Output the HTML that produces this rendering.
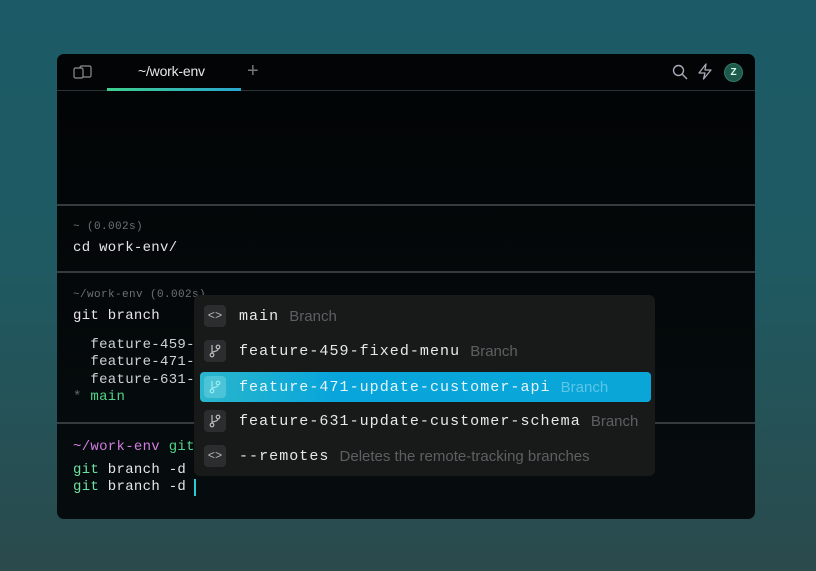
<!DOCTYPE html>
<html><head><style>
*{margin:0;padding:0;box-sizing:border-box}
body{width:816px;height:571px;overflow:hidden;background:linear-gradient(180deg,#1b5a66 0%,#1f5a62 45%,#2a4a4c 100%);font-family:"Liberation Mono",monospace;position:relative}
.win{position:absolute;left:57px;top:54px;width:698px;height:465px;background:linear-gradient(180deg,#020405 0%,#060c0e 100%);border-radius:7px;overflow:hidden}
.tabbar{position:absolute;left:0;top:0;width:698px;height:37px;border-bottom:1px solid #2c3336}
.tab{position:absolute;left:81px;top:9px;color:#e8e8e8;font:14px "Liberation Sans",sans-serif;letter-spacing:-.2px}
.uline{position:absolute;left:50px;top:34px;width:134px;height:3px;background:linear-gradient(90deg,#3fcf8e,#2aa6d0)}
.sep{position:absolute;left:0;width:698px;height:2px;background:#343c3f}
.t{position:absolute;left:16px;font-size:14px;letter-spacing:.3px;color:#e6e6e6;white-space:pre}
.s{position:absolute;left:16px;font-size:11px;letter-spacing:.4px;color:#6b7275;white-space:pre}
.pop{position:absolute;left:194px;top:295px;width:461px;height:181px;background:#181919;border-radius:6px}
.row{position:absolute;left:6px;width:451px;height:30px;border-radius:4px}
.ic{position:absolute;left:4px;top:4px;width:22px;height:22px;border-radius:4px;background:#2c2d2e;color:#bbb;font-size:12px;text-align:center;line-height:22px}
.lb{position:absolute;left:39px;top:6px;font-size:15px;letter-spacing:1.05px;color:#e8e8e8;white-space:pre}
.ds{font-family:"Liberation Sans",sans-serif;font-size:15px;letter-spacing:0;color:#5d6062;position:relative;top:1px}
.hl{background:linear-gradient(90deg,#2ab6cc,#08a5dc 30%,#0aa6d8)}
.hl .ic{background:#4cc3d7;color:#9be}
.hl .lb{color:#e6f6fb}
.hl .ds{color:#5bc6e6}
</style></head><body>
<div class="win">
 <div class="tabbar">
  <svg style="position:absolute;left:16px;top:11px" width="19" height="15" viewBox="0 0 19 15" fill="none" stroke="#8a9090" stroke-width="1.2"><rect x="1" y="3" width="9" height="10" rx="1.5"/><path d="M7 3V2.5A1.5 1.5 0 0 1 8.5 1H16.5A1.5 1.5 0 0 1 18 2.5V10.5A1.5 1.5 0 0 1 16.5 12H10"/></svg>
  <div class="tab">~/work-env</div>
  <div style="position:absolute;left:190px;top:6px;color:#777;font:20px 'Liberation Sans',sans-serif">+</div>
  <svg style="position:absolute;left:615px;top:10px" width="16" height="16" viewBox="0 0 16 16" fill="none" stroke="#aab" stroke-width="1.4"><circle cx="6.5" cy="6.5" r="5"/><path d="M10.3 10.3L15 15"/></svg>
  <svg style="position:absolute;left:640px;top:9px" width="16" height="17" viewBox="0 0 16 17" fill="none" stroke="#aab" stroke-width="1.3" stroke-linejoin="round"><path d="M9 1L2 10H8L6.5 16L14 7H8Z"/></svg>
  <div style="position:absolute;left:667px;top:9px;width:19px;height:19px;border-radius:50%;background:#1e5a4c;border:1px solid #2f7a66;color:#dfe;font:bold 10px 'Liberation Sans',sans-serif;text-align:center;line-height:17px">Z</div>
  <div class="uline"></div>
 </div>
 <div class="sep" style="top:150px"></div>
 <div class="s" style="top:167px">~ (0.002s)</div>
 <div class="t" style="top:186px">cd work-env/</div>
 <div class="sep" style="top:217px"></div>
 <div class="s" style="top:235px">~/work-env (0.002s)</div>
 <div class="t" style="top:254px">git branch</div>
 <div class="t" style="top:283px;color:#cfd2d3">  feature-459-</div>
 <div class="t" style="top:300px;color:#cfd2d3">  feature-471-</div>
 <div class="t" style="top:318px;color:#cfd2d3">  feature-631-</div>
 <div class="t" style="top:335px;color:#666">* <span style="color:#4fd38a">main</span></div>
 <div class="sep" style="top:368px"></div>
 <div class="t" style="top:385px;color:#d27ee0">~/work-env <span style="color:#4fd38a">git</span></div>
 <div class="t" style="top:408px"><span style="color:#6fe0a0">git</span> branch -d</div>
 <div class="t" style="top:425px"><span style="color:#6fe0a0">git</span> branch -d</div>
 <div style="position:absolute;left:137px;top:425px;width:2px;height:17px;background:#2ec8d8"></div>
</div>
<div class="pop">
 <div class="row" style="top:6px"><div class="ic">&lt;&gt;</div><div class="lb">main <span class="ds">Branch</span></div></div>
 <div class="row" style="top:41px"><div class="ic"><svg width="12" height="14" viewBox="0 0 12 14" fill="none" stroke="#bbb" stroke-width="1.2" style="margin-top:4px"><circle cx="3" cy="11" r="1.8"/><circle cx="9" cy="3" r="1.8"/><path d="M3 1V9M9 5C9 8 3 7 3 9"/></svg></div><div class="lb">feature-459-fixed-menu <span class="ds">Branch</span></div></div>
 <div class="row hl" style="top:77px"><div class="ic"><svg width="12" height="14" viewBox="0 0 12 14" fill="none" stroke="#9ee" stroke-width="1.2" style="margin-top:4px"><circle cx="3" cy="11" r="1.8"/><circle cx="9" cy="3" r="1.8"/><path d="M3 1V9M9 5C9 8 3 7 3 9"/></svg></div><div class="lb">feature-471-update-customer-api <span class="ds">Branch</span></div></div>
 <div class="row" style="top:111px"><div class="ic"><svg width="12" height="14" viewBox="0 0 12 14" fill="none" stroke="#bbb" stroke-width="1.2" style="margin-top:4px"><circle cx="3" cy="11" r="1.8"/><circle cx="9" cy="3" r="1.8"/><path d="M3 1V9M9 5C9 8 3 7 3 9"/></svg></div><div class="lb">feature-631-update-customer-schema <span class="ds">Branch</span></div></div>
 <div class="row" style="top:146px"><div class="ic">&lt;&gt;</div><div class="lb">--remotes <span class="ds">Deletes the remote-tracking branches</span></div></div>
</div>
</body></html>
